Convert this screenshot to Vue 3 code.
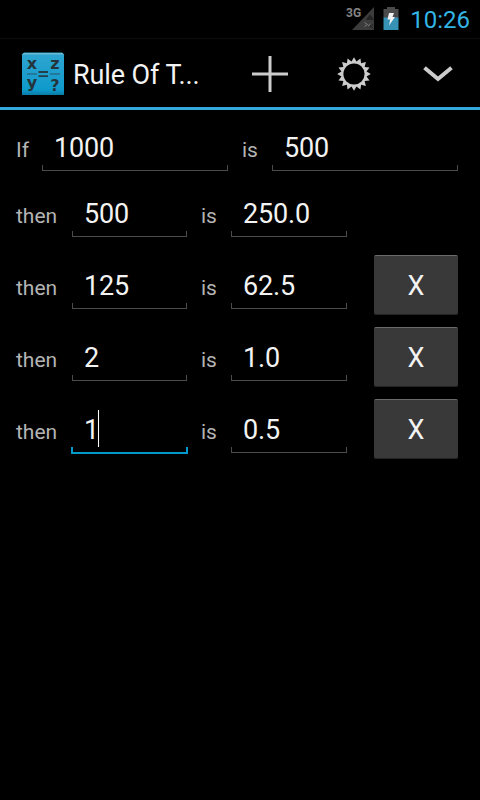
<template>
  <div class="screen">
    <div class="status-bar">
      <svg class="signal" width="30" height="28" viewBox="0 0 30 28">
        <path d="M28 1V24H6Z" fill="#3c3c3c" />
        <path d="M20.500 13.500L24 9L27.500 13.500ZM24 19L27.500 22.500M27 18L24 22" fill="#242424" stroke="#242424" />
        <path d="M18.500 16.500L21.500 18.500L18.500 20.500M22 20L24.500 18" fill="none" stroke="#7a7a7a" />
        <text x="0" y="11" class="net">3G</text>
      </svg>
      <svg class="battery" width="16" height="24" viewBox="0 0 16 24">
        <path d="M4 1h8v2h3.500v9H.5V3H4Z" fill="#4b4b4b" />
        <path d="M.5 11.500h15V24H.5Z" fill="#3793b5" />
        <path d="M6 7h5l-1.500 4H12l-6 8.500 1.200-6H4.500Z" fill="#f2f2f2" />
      </svg>
      <span class="clock">10:26</span>
    </div>

    <div class="action-bar">
      <svg class="logo" width="44" height="44" viewBox="0 0 44 44">
        <defs>
          <linearGradient id="tile" x1="0" y1="0" x2="0" y2="1">
            <stop offset="0" stop-color="#2fa5cf" />
            <stop offset=".45" stop-color="#209fce" />
            <stop offset=".88" stop-color="#0d9acb" />
            <stop offset="1" stop-color="#087ba5" />
          </linearGradient>
        </defs>
        <path d="M3 .5H41L43 2.500V43H1V2.500Z" fill="url(#tile)" />
        <path d="M2.500 1H41.500L43 2.500H1Z" fill="#68b9d3" />
        <path d="M6 22H16M29 22H39" stroke="#285568" stroke-width="1.200" />
        <path d="M17.500 20H27M17.500 24.200H27" stroke="#233e49" stroke-width="1.800" />
        <text x="11" y="17">x</text>
        <text x="34" y="17">z</text>
        <text x="11" y="36">y</text>
        <text x="34" y="39">?</text>
      </svg>
      <h1>Rule Of T...</h1>
      <button class="action" title="Add" @click="addRow">
        <svg width="36" height="36" viewBox="0 0 36 36">
          <path d="M18 0V36M0 18H36" stroke="#ccc" stroke-width="3" />
        </svg>
      </button>
      <button class="action" title="Settings">
        <svg width="34" height="34" viewBox="-17 -17 34 34">
          <polygon :points="gear" fill="#ccc" />
          <circle r="10.600" fill="#000" />
        </svg>
      </button>
      <button class="action" title="More">
        <svg width="30" height="16" viewBox="0 0 30 16">
          <path d="M1.500 1.800L15 13L28.500 1.800" fill="none" stroke="#ccc" stroke-width="4" />
        </svg>
      </button>
    </div>

    <div class="rules">
      <div class="row base">
        <label>If</label>
        <div class="field"><input v-model="x" /></div>
        <label>is</label>
        <div class="field"><input v-model="z" /></div>
      </div>
      <div v-for="(r, i) in rows" :key="r.id" class="row" :class="{ first: i === 0 }">
        <label>then</label>
        <div class="field" :class="{ active: r.id === active }">
          <input v-model="r.y" @focus="active = r.id" />
          <span v-if="r.id === active" class="caret"></span>
        </div>
        <label>is</label>
        <div class="field"><input :value="result(r.y)" readonly /></div>
        <button v-if="i > 0" class="remove" @click="removeRow(r.id)">X</button>
      </div>
    </div>
  </div>
</template>

<script setup>
import { ref } from 'vue'

const x = ref('1000')
const z = ref('500')
const active = ref(4)
const rows = ref([
  { id: 1, y: '500' },
  { id: 2, y: '125' },
  { id: 3, y: '2' },
  { id: 4, y: '1' },
])

// 16 teeth, alternating outer and inner radius
const gear = Array.from({ length: 32 }, (_, i) => {
  const r = i % 2 ? 12.8 : 16.8
  const a = (i * Math.PI) / 16
  return `${(r * Math.sin(a)).toFixed(2)},${(-r * Math.cos(a)).toFixed(2)}`
}).join(' ')

function result(y) {
  const n = (Number(y) * Number(z.value)) / Number(x.value)
  if (!y || !Number.isFinite(n)) return ''
  return Number.isInteger(n) ? n.toFixed(1) : String(n)
}

function addRow() {
  const id = Date.now()
  rows.value.push({ id, y: '' })
  active.value = id
}

function removeRow(id) {
  rows.value = rows.value.filter((r) => r.id !== id)
}
</script>

<style>
body {
  background: #000;
}
</style>

<style scoped>
.screen {
  width: 480px;
  height: 800px;
  overflow: hidden;
  background: #000;
  color: #f3f3f3;
  font-family: Roboto, sans-serif;
}
.status-bar {
  display: flex;
  justify-content: flex-end;
  height: 38px;
  padding-right: 10px;
}
.signal {
  margin: 6px 7px 0 0;
}
.net {
  font: bold 12px Roboto, sans-serif;
  fill: #858585;
}
.battery {
  margin: 6px 11px 0 0;
}
.clock {
  color: #33b5e5;
  font-size: 24px;
  line-height: 40px;
}
.action-bar {
  display: flex;
  align-items: center;
  box-sizing: border-box;
  height: 72px;
  padding: 2px 0 0 21px;
  border-top: 1px solid #0c0c0c;
  border-bottom: 3px solid #33a9dc;
}
.logo {
  flex: none;
}
.logo text {
  font: bold 16px "DejaVu Sans", sans-serif;
  text-anchor: middle;
  fill: #25343b;
}
h1 {
  flex: 1;
  margin: 1px 0 0 8px;
  font-size: 27px;
  font-weight: 400;
  line-height: 32px;
  letter-spacing: -0.1px;
  white-space: nowrap;
}
.action {
  display: flex;
  align-items: center;
  justify-content: center;
  width: 84px;
  height: 66px;
  padding: 0;
  border: 0;
  background: none;
}
.rules {
  padding-top: 5px;
}
.row {
  display: flex;
  align-items: baseline;
  box-sizing: border-box;
  height: 72px;
  padding: 13px 22px 0 16px;
}
.row.base,
.row.first {
  height: 66px;
  padding-top: 10px;
}
.row.first {
  margin-bottom: 3px;
}
label {
  width: 56px;
  color: #b4b4b4;
  font-size: 21px;
}
.field + label {
  width: 30px;
  margin-left: 14px;
}
.base label:first-child {
  width: 26px;
}
.field {
  position: relative;
  box-sizing: border-box;
  width: 115px;
  height: 46px;
}
.field + label + .field {
  width: 116px;
}
.base .field,
.base .field + label + .field {
  width: 186px;
}
/* short side ticks of the underline */
.field::after {
  content: "";
  position: absolute;
  right: 0;
  bottom: 0;
  left: 0;
  height: 5px;
  border: 1px solid #4c4c4c;
  border-top: 0;
  pointer-events: none;
}
.field.active::after {
  right: -1px;
  bottom: -1px;
  left: -1px;
  border: 2px solid #0099cc;
  border-top: 0;
}
input {
  display: block;
  box-sizing: border-box;
  width: 100%;
  height: 46px;
  padding: 0 12px;
  border: 0;
  outline: 0;
  background: none;
  color: inherit;
  font: 27px/46px Roboto, sans-serif;
  letter-spacing: -0.15px;
}
.caret {
  position: absolute;
  top: 3px;
  left: 26px;
  width: 1px;
  height: 37px;
  background: #fff;
  box-shadow: 0 0 1px #555;
}
.remove {
  align-self: flex-start;
  box-sizing: border-box;
  width: 84px;
  height: 60px;
  margin: -8px 0 0 auto;
  padding: 2px 0 0;
  border: 0;
  border-top: 1px solid #6b6b6b;
  border-bottom: 1px solid #242424;
  border-radius: 2px;
  background: #393939;
  color: #f3f3f3;
  font: 27px Roboto, sans-serif;
}
</style>
